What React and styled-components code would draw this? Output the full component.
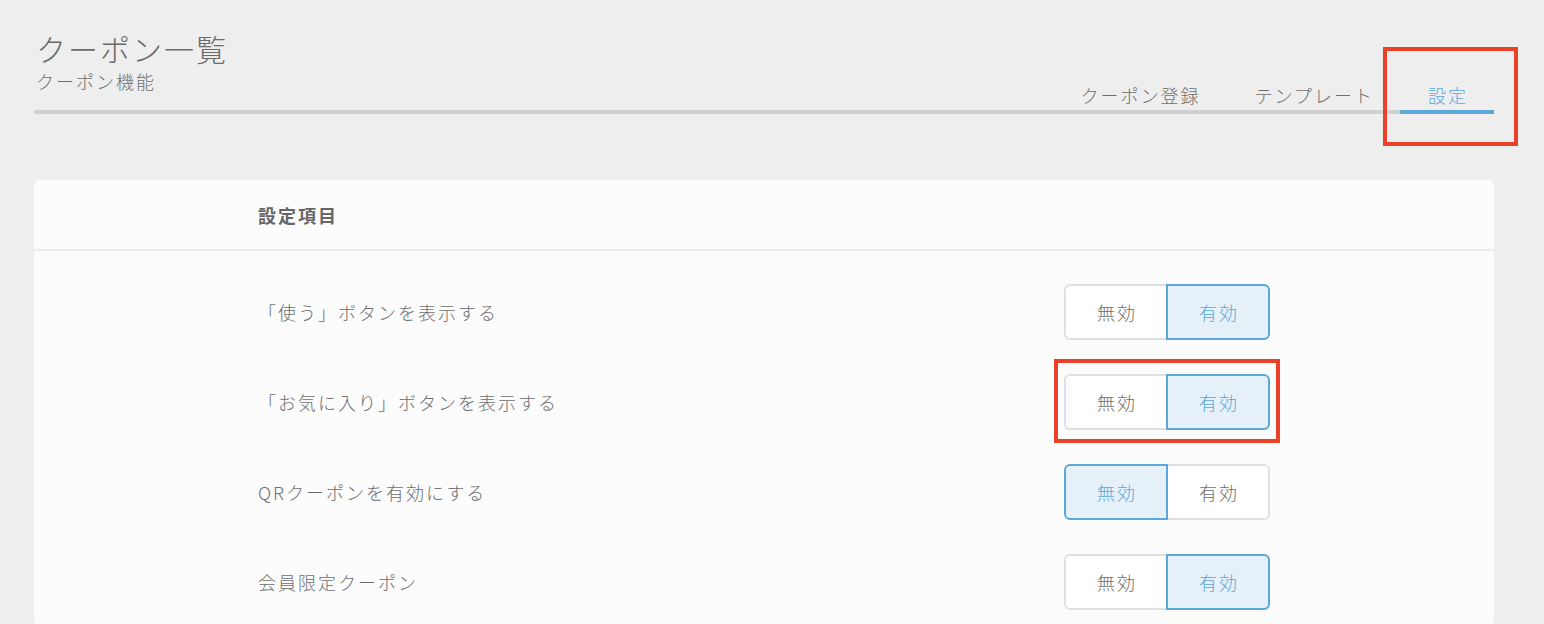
import React from 'react';
import styled, { createGlobalStyle } from 'styled-components';

const GlobalStyle = createGlobalStyle`
  body {
    margin: 0;
    background: #eeeeee;
    font-family: "Noto Sans CJK JP", "Noto Sans", sans-serif;
    color: #6e6e6e;
  }
`;

const Page = styled.div`
  padding: 28px 50px 0 34px;
`;

const Header = styled.div`
  display: flex;
  justify-content: space-between;
  align-items: flex-end;
  border-bottom: 4px solid #d1d1d1;
`;

const TitleBlock = styled.div`
  padding: 0 0 16px 2px;
`;

const Title = styled.h1`
  margin: 0;
  font-size: 30px;
  font-weight: 300;
  line-height: 40px;
  letter-spacing: 2px;
  color: #6a6a6a;
`;

const Subtitle = styled.div`
  font-size: 18px;
  font-weight: 300;
  line-height: 26px;
  letter-spacing: 2px;
  color: #6e6e6e;
`;

const Tabs = styled.nav`
  display: flex;
  margin-bottom: -4px;
`;

const Tab = styled.div`
  position: relative;
  padding: 0 26px 1px 28px;
  font-size: 18px;
  font-weight: 300;
  line-height: 28px;
  letter-spacing: 2px;
  color: ${p => (p.active ? '#5aa8da' : '#6e6e6e')};
  border-bottom: 4px solid ${p => (p.active ? '#5aa8da' : 'transparent')};
`;

const Highlight = styled.span`
  position: absolute;
  top: ${p => p.t}px;
  bottom: ${p => p.b}px;
  left: ${p => p.l}px;
  right: ${p => p.r}px;
  border: 4px solid #ec4129;
  pointer-events: none;
`;

const Card = styled.section`
  margin-top: 66px;
  background: #fcfcfc;
  border-radius: 6px;
`;

const CardHeader = styled.div`
  height: 69px;
  display: flex;
  align-items: center;
  padding-left: 224px;
  border-bottom: 2px solid #ececec;
  font-size: 18px;
  font-weight: 700;
  letter-spacing: 2px;
  color: #666;
`;

const CardBody = styled.div`
  padding-top: 16px;
`;

const Row = styled.div`
  display: grid;
  grid-template-columns: 806px auto;
  align-items: center;
  height: 90px;
  padding-left: 224px;
`;

const Label = styled.div`
  font-size: 18px;
  font-weight: 300;
  letter-spacing: 2px;
  color: #6e6e6e;
`;

const ToggleWrap = styled.div`
  position: relative;
  justify-self: start;
`;

const Toggle = styled.div`
  display: flex;
  width: 206px;
  height: 56px;
`;

const Option = styled.button`
  flex: 1;
  margin: 0;
  padding: 0 0 0 2px;
  font-family: inherit;
  font-size: 18px;
  font-weight: 300;
  letter-spacing: 2px;
  cursor: pointer;
  background: ${p => (p.selected ? '#e5f0f8' : '#ffffff')};
  color: ${p => (p.selected ? '#5aa8da' : '#6e6e6e')};
  border: 2px solid ${p => (p.selected ? '#5aa8da' : '#dde1e6')};
  position: relative;
  z-index: ${p => (p.selected ? 1 : 0)};
  &:first-child {
    border-radius: 6px 0 0 6px;
    ${p => (!p.selected ? 'border-right: none;' : '')}
  }
  &:last-child {
    border-radius: 0 6px 6px 0;
    ${p => (!p.selected ? 'border-left: none;' : '')}
  }
`;

const settings = [
  { label: '「使う」ボタンを表示する', value: true },
  { label: '「お気に入り」ボタンを表示する', value: true, marked: true },
  { label: 'QRクーポンを有効にする', value: false },
  { label: '会員限定クーポン', value: true },
];

export default function App() {
  return (
    <Page>
      <GlobalStyle />
      <Header>
        <TitleBlock>
          <Title>クーポン一覧</Title>
          <Subtitle>クーポン機能</Subtitle>
        </TitleBlock>
        <Tabs>
          <Tab>クーポン登録</Tab>
          <Tab>テンプレート</Tab>
          <Tab active>
            設定
            <Highlight t={-34} b={-36} l={-17} r={-24} />
          </Tab>
        </Tabs>
      </Header>

      <Card>
        <CardHeader>設定項目</CardHeader>
        <CardBody>
          {settings.map(s => (
            <Row key={s.label}>
              <Label>{s.label}</Label>
              <ToggleWrap>
                <Toggle>
                  <Option selected={!s.value}>無効</Option>
                  <Option selected={s.value}>有効</Option>
                </Toggle>
                {s.marked && <Highlight t={-15} b={-13} l={-10} r={-10} />}
              </ToggleWrap>
            </Row>
          ))}
        </CardBody>
      </Card>
    </Page>
  );
}
